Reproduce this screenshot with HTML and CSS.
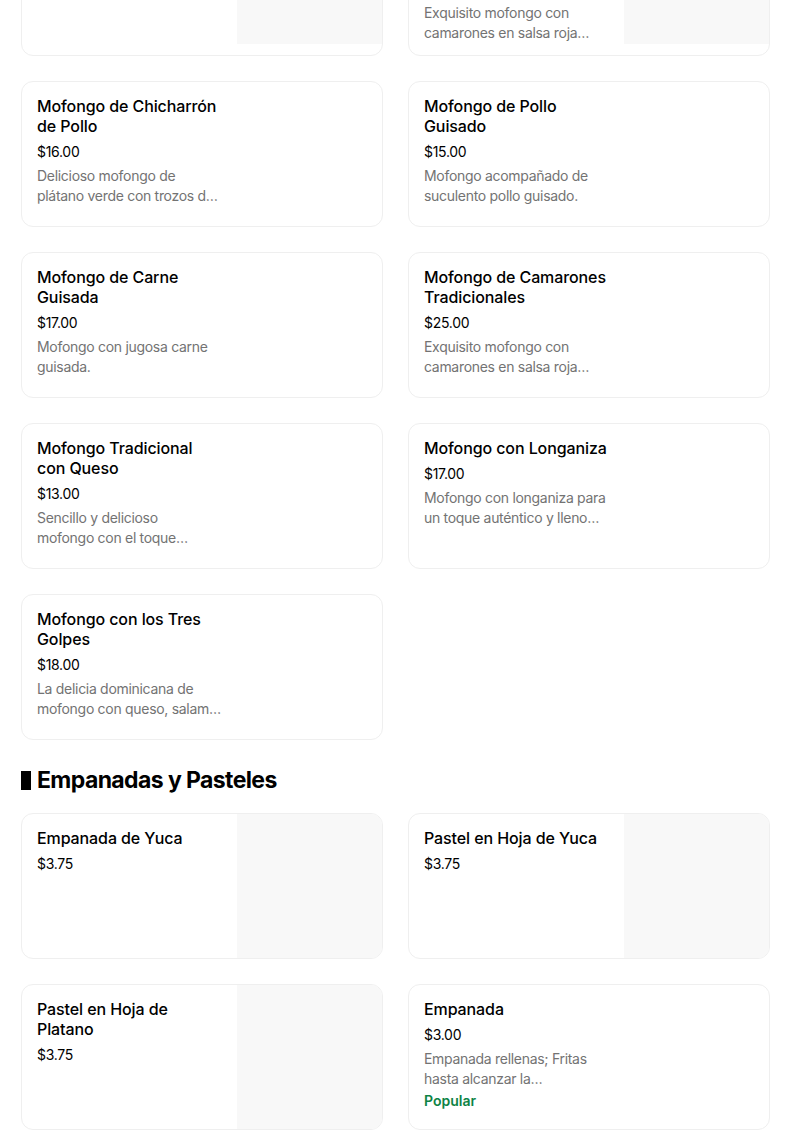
FILE: index.html
```html
<!DOCTYPE html>
<html lang="es">
<head>
<meta charset="utf-8">
<link rel="stylesheet" href="styles.css">
</head>
<body>
<main class="page">
  <section class="section">
    <div class="grid">
      <div class="card card-tall">
        <div class="info">
          <div class="title">Mofongo de Camarones al Ajillo con Tostones Fritos</div>
          <div class="price">$25.00</div>
        </div>
        <div class="thumb"></div>
      </div>
      <div class="card card-tall">
        <div class="info">
          <div class="title">Mofongo de Camarones con Salsa Roja y Tostones Fritos</div>
          <div class="price">$25.00</div>
          <div class="desc">Exquisito mofongo con camarones en salsa roja<br>criolla servidos al momento.</div>
        </div>
        <div class="thumb"></div>
      </div>

      <div class="card">
        <div class="info">
          <div class="title">Mofongo de Chicharrón de Pollo</div>
          <div class="price">$16.00</div>
          <div class="desc">Delicioso mofongo de plátano verde con trozos de chicharrón de pollo.</div>
        </div>
      </div>
      <div class="card">
        <div class="info">
          <div class="title">Mofongo de Pollo Guisado</div>
          <div class="price">$15.00</div>
          <div class="desc">Mofongo acompañado de suculento pollo guisado.</div>
        </div>
      </div>

      <div class="card">
        <div class="info">
          <div class="title">Mofongo de Carne Guisada</div>
          <div class="price">$17.00</div>
          <div class="desc">Mofongo con jugosa carne guisada.</div>
        </div>
      </div>
      <div class="card">
        <div class="info">
          <div class="title">Mofongo de Camarones Tradicionales</div>
          <div class="price">$25.00</div>
          <div class="desc">Exquisito mofongo con camarones en salsa roja<br>tradicional.</div>
        </div>
      </div>

      <div class="card">
        <div class="info">
          <div class="title">Mofongo Tradicional con Queso</div>
          <div class="price">$13.00</div>
          <div class="desc">Sencillo y delicioso<br>mofongo con el toque<br>especial del queso.</div>
        </div>
      </div>
      <div class="card">
        <div class="info">
          <div class="title">Mofongo con Longaniza</div>
          <div class="price">$17.00</div>
          <div class="desc">Mofongo con longaniza para un toque auténtico y lleno<br>de sabor.</div>
        </div>
      </div>

      <div class="card">
        <div class="info">
          <div class="title">Mofongo con los Tres Golpes</div>
          <div class="price">$18.00</div>
          <div class="desc">La delicia dominicana de mofongo con queso, salami y huevo frito.</div>
        </div>
      </div>
    </div>
  </section>

  <section class="section">
    <h2 class="heading"><span class="bar"></span>Empanadas y Pasteles</h2>
    <div class="grid">
      <div class="card">
        <div class="info">
          <div class="title">Empanada de Yuca</div>
          <div class="price">$3.75</div>
        </div>
        <div class="thumb"></div>
      </div>
      <div class="card">
        <div class="info">
          <div class="title">Pastel en Hoja de Yuca</div>
          <div class="price">$3.75</div>
        </div>
        <div class="thumb"></div>
      </div>
      <div class="card">
        <div class="info">
          <div class="title">Pastel en Hoja de Platano</div>
          <div class="price">$3.75</div>
        </div>
        <div class="thumb"></div>
      </div>
      <div class="card">
        <div class="info">
          <div class="title">Empanada</div>
          <div class="price">$3.00</div>
          <div class="desc">Empanada rellenas; Fritas hasta alcanzar la<br>perfección dorada.</div>
          <div class="tag">Popular</div>
        </div>
      </div>
    </div>
  </section>
</main>
</body>
</html>
```

FILE: styles.css
```css
* { box-sizing: border-box; }
html, body {
  margin: 0;
  padding: 0;
  background: #ffffff;
}
body {
  font-family: Inter, "Noto Sans", Arial, sans-serif;
  color: #000000;
  overflow: hidden;
}
.page {
  width: 749px;
  margin-left: 21px;
  margin-top: -104px;
}
.grid {
  display: grid;
  grid-template-columns: 362px 362px;
  column-gap: 25px;
  row-gap: 25px;
}
.section + .section {
  margin-top: 23px;
}
.heading {
  display: flex;
  align-items: center;
  margin: 0 0 16px 0;
  height: 34px;
  font-size: 23px;
  font-weight: 700;
  letter-spacing: -0.6px;
}
.bar {
  width: 10px;
  height: 19px;
  background: #000000;
  margin-right: 6px;
}
.card {
  display: flex;
  height: 146px;
  border: 1px solid #efefef;
  border-radius: 12px;
  overflow: hidden;
  background: #ffffff;
}
.card-tall {
  height: 160px;
  align-items: flex-start;
}
.info {
  width: 215px;
  flex: 0 0 215px;
  padding: 14px 15px 0 15px;
}
.card-tall .info {
  padding-top: 16px;
}
.thumb {
  flex: 1;
  align-self: stretch;
  background: #f8f8f8;
}
.card-tall .thumb {
  align-self: flex-start;
  height: 147px;
}
.title {
  font-size: 16px;
  line-height: 20px;
  font-weight: 500;
  letter-spacing: -0.1px;
  color: #000000;
}
.price {
  margin-top: 6px;
  font-size: 14px;
  line-height: 20px;
  color: #000000;
  letter-spacing: -0.3px;
}
.desc {
  margin-top: 4px;
  font-size: 14px;
  line-height: 20px;
  letter-spacing: -0.3px;
  color: #737373;
  display: -webkit-box;
  -webkit-line-clamp: 2;
  -webkit-box-orient: vertical;
  overflow: hidden;
}
.tag {
  margin-top: 2px;
  font-size: 14px;
  line-height: 20px;
  font-weight: 600;
  color: #0e8345;
}
```
